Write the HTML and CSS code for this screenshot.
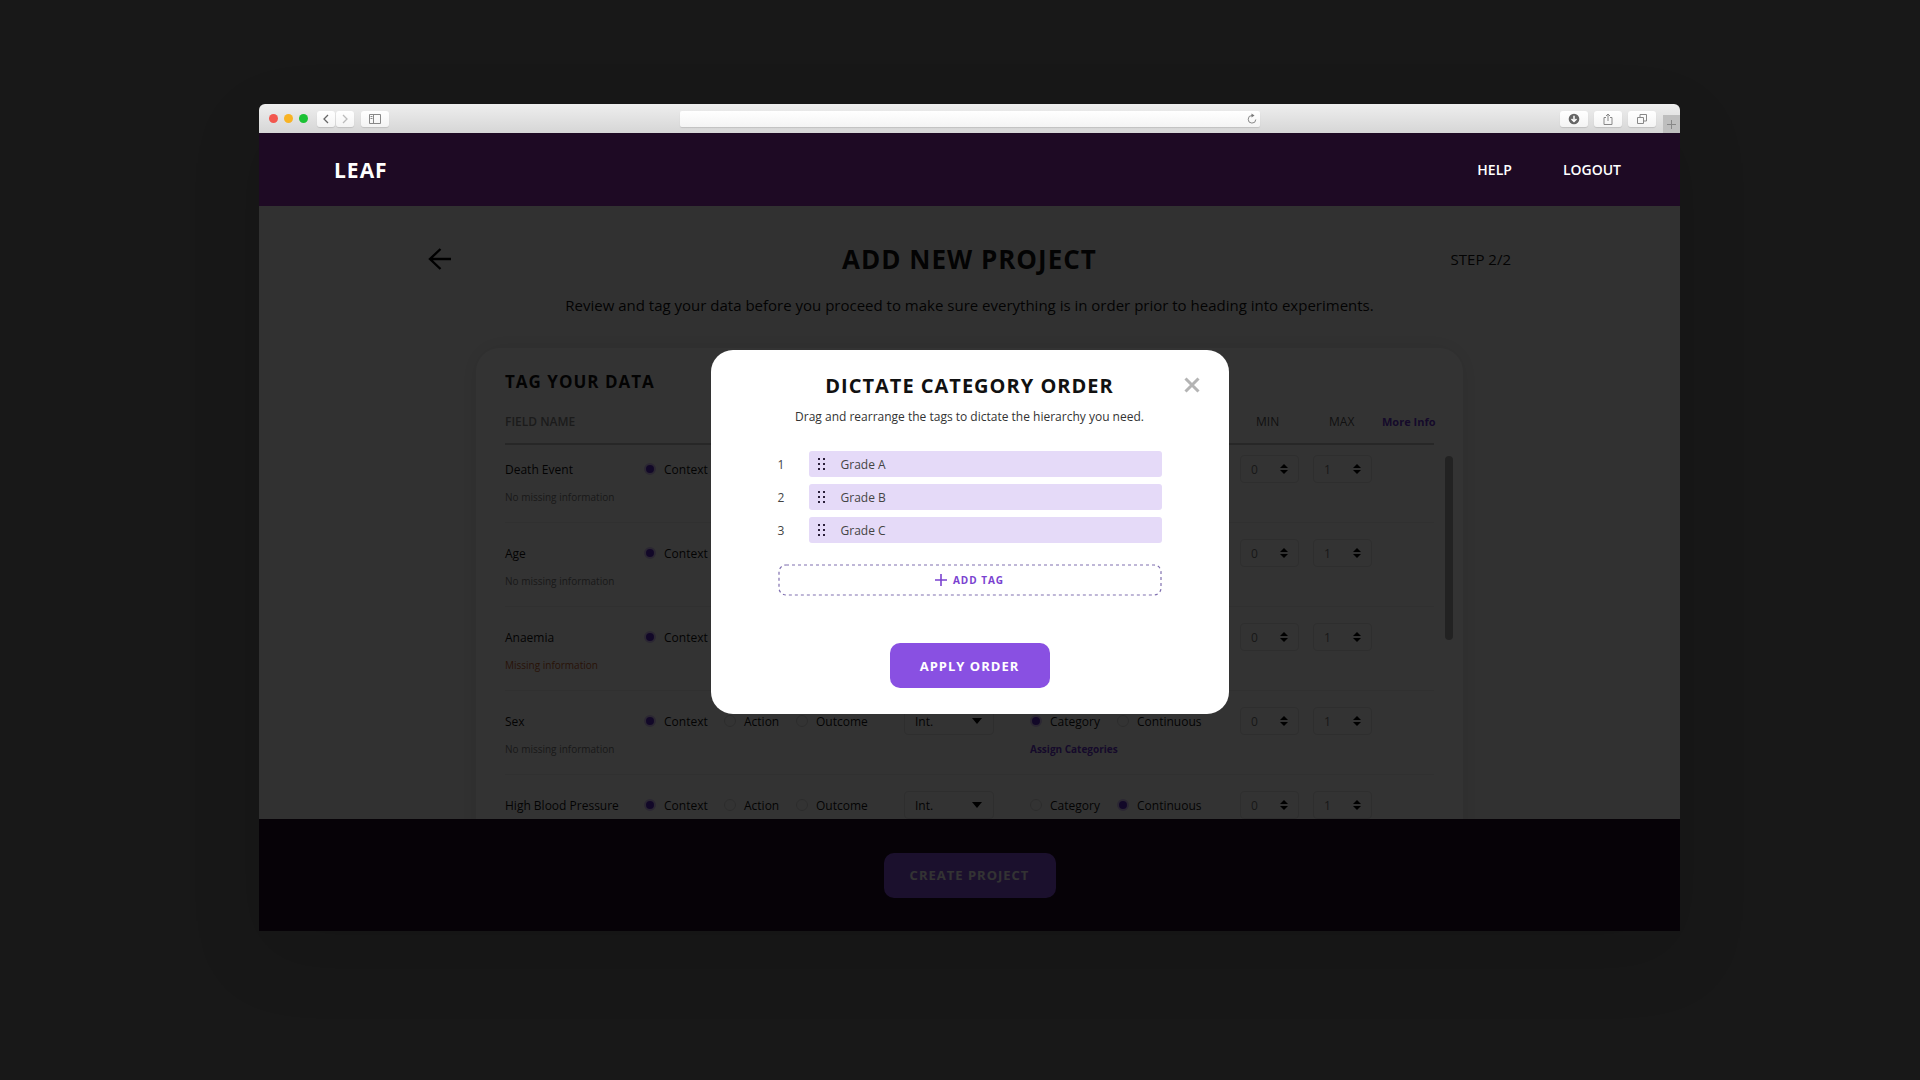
FILE: index.html
```html
<!DOCTYPE html>
<html lang="en">
<head>
<meta charset="utf-8">
<title>Leaf</title>
<link rel="stylesheet" href="styles.css">
</head>
<body>
<div class="window">
  <div class="toolbar">
    <div class="lights"><span class="light red"></span><span class="light amber"></span><span class="light green"></span></div>
    <div class="pair">
      <button class="tool" aria-label="Back"><svg width="8" height="10" viewBox="0 0 8 10"><path d="M6 1 2 5l4 4" fill="none" stroke="#666" stroke-width="1.3"/></svg></button>
      <button class="tool" aria-label="Forward"><svg width="8" height="10" viewBox="0 0 8 10"><path d="m2 1 4 4-4 4" fill="none" stroke="#bbb" stroke-width="1.3"/></svg></button>
    </div>
    <button class="tool wide" aria-label="Sidebar"><svg width="12" height="10" viewBox="0 0 12 10"><path d="M.5.5h11v9H.5zM4.500.5v9M1.500 2.500h2M1.500 4.500h2" fill="none" stroke="#888"/></svg></button>
    <div class="address">
      <input class="url" type="text" aria-label="Address">
      <button class="reload" aria-label="Reload"><svg width="10" height="12" viewBox="0 0 10 12"><path d="M5 2.500a3.800 3.800 0 1 0 3.800 4" fill="none" stroke="#888"/><path d="M4.500.5 7.500 2.500 4.500 4.500z" fill="#777"/></svg></button>
    </div>
    <div class="tools">
      <button class="tool wide" aria-label="Downloads"><svg width="12" height="12" viewBox="0 0 12 12"><circle cx="6" cy="6" r="5.300" fill="#666"/><path d="M6 2.800v5M3.500 6 6 8.500 8.500 6" fill="none" stroke="#fff" stroke-width="1.500"/></svg></button>
      <button class="tool wide" aria-label="Share"><svg width="10" height="12" viewBox="0 0 10 12"><path d="M3 4.500H1v7h8v-7H7M5 8V1M3 3l2-2 2 2" fill="none" stroke="#888"/></svg></button>
      <button class="tool wide" aria-label="Tabs"><svg width="10" height="10" viewBox="0 0 10 10"><path d="M.5 3.500h6v6h-6zM3 3.500v-3h6.500V7h-3" fill="none" stroke="#888"/></svg></button>
    </div>
    <button class="newtab" aria-label="New tab"><svg width="9" height="9" viewBox="0 0 9 9"><path d="M4.500 0v9M0 4.500h9" stroke="#888"/></svg></button>
  </div>

  <header class="nav">
    <a class="brand" href="#">LEAF</a>
    <nav class="links"><a href="#">HELP</a><a href="#">LOGOUT</a></nav>
  </header>

  <div class="stage">
    <main class="content">
      <div class="heading">
        <button class="back" aria-label="Go back"><svg width="24" height="24" viewBox="0 0 24 24"><path d="M12.500 2 2 12l10.500 10M2 12h21" fill="none" stroke="#000" stroke-width="2.400"/></svg></button>
        <h1>ADD NEW PROJECT</h1>
        <span class="step">STEP 2/2</span>
      </div>
      <p class="intro">Review and tag your data before you proceed to make sure everything is in order prior to heading into experiments.</p>

      <section class="card">
        <div class="data">
          <h2>TAG YOUR DATA</h2>
          <table>
            <colgroup><col class="c-field"><col class="c-role"><col class="c-type"><col class="c-kind"><col class="c-min"><col class="c-max"><col class="c-more"></colgroup>
            <thead><tr><th>FIELD NAME</th><th></th><th></th><th></th><th class="num">MIN</th><th class="num">MAX</th><th class="more"><a href="#">More Info</a></th></tr></thead>
            <tbody id="rows"></tbody>
          </table>
        </div>
        <div class="scrollbar"></div>
      </section>
    </main>

    <footer class="footer"><button class="primary create">CREATE PROJECT</button></footer>

    <div class="scrim">
      <section class="dialog" role="dialog" aria-labelledby="dialog-title">
        <div class="dialog-head">
          <h2 id="dialog-title">DICTATE CATEGORY ORDER</h2>
          <button class="close" aria-label="Close"><svg width="16" height="16" viewBox="0 0 16 16"><path d="m1.500 1.500 13 13m0-13-13 13" stroke="#b4b4b4" stroke-width="3"/></svg></button>
        </div>
        <p>Drag and rearrange the tags to dictate the hierarchy you need.</p>
        <ol class="tags">
          <li><span class="rank">1</span><span class="tag"><svg class="grip" width="8" height="12" viewBox="0 0 8 12"><path d="M0 0h2v2H0zM5 0h2v2H5zM0 5h2v2H0zM5 5h2v2H5zM0 10h2v2H0zM5 10h2v2H5z" fill="#2b1f3a"/></svg>Grade A</span></li>
          <li><span class="rank">2</span><span class="tag"><svg class="grip" width="8" height="12" viewBox="0 0 8 12"><path d="M0 0h2v2H0zM5 0h2v2H5zM0 5h2v2H0zM5 5h2v2H5zM0 10h2v2H0zM5 10h2v2H5z" fill="#2b1f3a"/></svg>Grade B</span></li>
          <li><span class="rank">3</span><span class="tag"><svg class="grip" width="8" height="12" viewBox="0 0 8 12"><path d="M0 0h2v2H0zM5 0h2v2H5zM0 5h2v2H0zM5 5h2v2H5zM0 10h2v2H0zM5 10h2v2H5z" fill="#2b1f3a"/></svg>Grade C</span></li>
        </ol>
        <button class="add"><svg class="dashes" aria-hidden="true"><rect x="1" y="1" rx="7"/></svg><svg width="12" height="12" viewBox="0 0 12 12"><path d="M6 0v12M0 6h12" stroke="#7a42d0" stroke-width="1.600"/></svg>ADD TAG</button>
        <button class="primary apply">APPLY ORDER</button>
      </section>
    </div>
  </div>
</div>
<script src="script.js"></script>
</body>
</html>
```
FILE: styles.css
```css
* { box-sizing: border-box; }

body {
  margin: 0;
  padding: 104px 240px 0 259px;
  min-height: 100vh;
  background: #181818;
  color: #111;
  font-family: "Open Sans", "Noto Sans", sans-serif;
  font-size: 12px;
  overflow-x: hidden;
}

h1, h2, p, ol { margin: 0; padding: 0; }
button, input, select { font: inherit; color: inherit; }
button { border: 0; padding: 0; background: none; display: inline-flex; align-items: center; justify-content: center; }
a { color: inherit; text-decoration: none; }
svg { display: block; flex: none; }

.window {
  display: flex;
  flex-direction: column;
  aspect-ratio: 1421 / 827;
  border-radius: 6px 6px 0 0;
  box-shadow: 0 24px 72px rgba(0, 0, 0, .12);
}

/* Browser toolbar */
.toolbar {
  position: relative;
  display: flex;
  align-items: center;
  height: 29px;
  padding-left: 10px;
  border-radius: 6px 6px 0 0;
  background: linear-gradient(#eee, #d6d6d6);
}
.lights { display: flex; gap: 6px; margin-right: 9px; }
.light { width: 9px; height: 9px; border-radius: 50%; }
.red { background: #f2574e; }
.amber { background: #f8b324; }
.green { background: #1cc235; }
.pair { display: flex; gap: 1px; margin-right: 7px; }
.tool { width: 18px; height: 16px; border-radius: 3px; background: linear-gradient(#fff, #f4f4f4); box-shadow: 0 1px 1px rgba(0, 0, 0, .12); }
.tool.wide { width: 28px; }
.address {
  display: flex;
  align-items: center;
  position: absolute;
  left: 421px;
  right: 420px;
  height: 16px;
  padding-right: 3px;
  border-radius: 2px;
  background: linear-gradient(#fff, #f4f4f4);
  box-shadow: 0 1px 1px rgba(0, 0, 0, .12);
}
.url { flex: 1; min-width: 0; height: 14px; padding: 0; border: 0; background: none; }
.tools { display: flex; gap: 6px; margin-left: auto; margin-right: 7px; }
.newtab { align-self: flex-end; width: 17px; height: 18px; background: #bebebe; }

/* App header */
.nav {
  display: flex;
  align-items: center;
  justify-content: space-between;
  height: 73px;
  padding: 0 59px 0 75px;
  background: #1e0a24;
  color: #fff;
}
.brand { font-size: 21px; font-weight: 700; letter-spacing: 1px; }
.links { display: flex; gap: 51px; font-size: 14px; font-weight: 600; }

.stage { position: relative; flex: 1; min-height: 0; display: flex; flex-direction: column; }
.content { flex: 1; min-height: 0; overflow: hidden; background: #f5f5f5; }
.heading {
  display: grid;
  grid-template-columns: 1fr auto 1fr;
  align-items: center;
  height: 38px;
  margin: 34px 169px 0;
}
.back { justify-self: start; }
h1 { font-size: 26px; line-height: 38px; font-weight: 700; letter-spacing: 1px; }
.step { justify-self: end; font-size: 15px; }
.intro { margin-top: 15px; font-size: 15px; line-height: 24px; text-align: center; }

.card {
  display: flex;
  gap: 11px;
  width: 69%;
  min-width: 987px;
  margin: 31px auto 0;
  padding: 20px 10px 60px 29px;
  border-radius: 24px;
  background: #fff;
  box-shadow: 0 0 24px rgba(0, 0, 0, .1);
}
.data { flex: 1; }
.card h2 { font-size: 17px; line-height: 28px; font-weight: 700; letter-spacing: 1px; }
.scrollbar { width: 8px; height: 184px; margin-top: 88px; border-radius: 4px; background: #a8a8a8; }

table { width: 100%; border-collapse: separate; border-spacing: 0; table-layout: fixed; }
.c-field { width: 139px; }
.c-role { width: 260px; }
.c-type { width: 126px; }
.c-min { width: 73px; }
.c-max { width: 69px; }
.c-more { width: 52px; }
th { height: 49px; padding: 3px 0 0; border-bottom: 2px solid #c4c4c4; font-size: 12px; font-weight: 600; color: #888; text-align: left; white-space: nowrap; }
.num { padding-left: 16px; font-weight: 400; color: #555; }
.more { font-size: 11px; }
td { padding: 16px 0 15px; height: 84px; vertical-align: top; border-bottom: 1px solid #ededed; white-space: nowrap; }
tbody tr:first-child td { height: 78px; padding-top: 10px; }
.line { display: flex; align-items: center; height: 28px; }
.note { display: block; margin-top: 4px; font-size: 10px; line-height: 20px; color: #7d7d7d; }
.note.warn { color: #c8602a; }
.more a, .note.assign { color: #6a35d2; font-weight: 700; }
.option { display: flex; align-items: center; gap: 8px; }
.role .option:nth-child(1) { width: 80px; }
.role .option:nth-child(2) { width: 72px; }
.kind .option:nth-child(1) { width: 87px; }
input[type="radio"] { appearance: none; width: 12px; height: 12px; margin: 0; border: 1px solid #dadada; border-radius: 50%; background: #fff; }
input[type="radio"]:checked { border: 2px solid #d5c0f7; background: #5b28c8; }

.select, .number { position: relative; display: block; height: 28px; }
.select { width: 90px; }
.number { width: 59px; }
.select select, .number input { appearance: none; width: 100%; height: 28px; padding: 0 10px; border: 1px solid #e4e4e4; border-radius: 4px; background: #fff; }
.number input { appearance: textfield; color: #777; }
.number input::-webkit-inner-spin-button { appearance: none; }
.select svg { position: absolute; right: 12px; top: 11px; }
.number svg { position: absolute; right: 11px; top: 9px; }

.footer { display: flex; align-items: center; justify-content: center; height: 112px; background: #1e0a24; }
.primary { height: 45px; border-radius: 10px; background: #8950e2; color: #fff; font-size: 13px; font-weight: 700; letter-spacing: 1px; }
.create { width: 172px; }
.apply { width: 160px; }

/* Dialog */
.scrim { position: absolute; inset: 0; display: flex; align-items: flex-start; justify-content: center; padding-top: 144px; background: rgba(0, 0, 0, .8); }
.dialog { display: flex; flex-direction: column; align-items: center; width: 518px; padding: 22px 67px 26px; border-radius: 22px; background: #fff; }
.dialog-head { position: relative; align-self: stretch; text-align: center; }
.dialog h2 { font-size: 20px; line-height: 28px; font-weight: 700; letter-spacing: 1px; white-space: nowrap; }
.close { position: absolute; right: -38px; top: 5px; }
.dialog p { margin-top: 7px; font-size: 12px; line-height: 20px; color: #333; white-space: nowrap; }
.tags { align-self: stretch; display: grid; gap: 7px; margin-top: 24px; list-style: none; color: #444; }
.tags li { display: flex; align-items: center; }
.rank { width: 31px; }
.tag { flex: 1; display: flex; align-items: center; gap: 15px; height: 26px; padding-left: 9px; border-radius: 3px; background: #e5daf8; }
.add { position: relative; align-self: stretch; gap: 6px; height: 32px; margin-top: 21px; color: #7a42d0; font-size: 10px; font-weight: 700; letter-spacing: 1px; }
.dashes { position: absolute; inset: 0; width: 100%; height: 100%; }
.dashes rect { width: calc(100% - 2px); height: calc(100% - 2px); fill: none; stroke: #8070b0; stroke-width: 1.2; stroke-dasharray: 3 3; }
.apply { margin-top: 47px; }
```
FILE: script.js
```js
const rows = [
  { name: "Death Event", kind: 0 },
  { name: "Age", kind: 1 },
  { name: "Anaemia", kind: 1, missing: true },
  { name: "Sex", kind: 0 },
  { name: "High Blood Pressure", kind: 1 }
];

const radios = (group, labels, checked) => labels.map((label, i) =>
  `<label class="option"><input type="radio" name="${group}"${i === checked ? " checked" : ""}>${label}</label>`).join("");

const number = (label, value) =>
  `<label class="number"><input type="number" aria-label="${label}" value="${value}">
  <svg width="8" height="10" viewBox="0 0 8 10"><path d="M4 0 8 4H0zM4 10 0 6h8z"/></svg></label>`;

document.getElementById("rows").innerHTML = rows.map((row, i) => `<tr>
  <td><div class="line">${row.name}</div><span class="note${row.missing ? " warn" : ""}">${row.missing ? "Missing information" : "No missing information"}</span></td>
  <td><div class="line role">${radios("role" + i, ["Context", "Action", "Outcome"], 0)}</div></td>
  <td><label class="select"><select aria-label="Data type"><option>Int.</option></select>
    <svg width="10" height="6" viewBox="0 0 10 6"><path d="M0 0h10L5 6z"/></svg></label></td>
  <td><div class="line kind">${radios("kind" + i, ["Category", "Continuous"], row.kind)}</div>${row.kind === 0 ? '<a class="note assign" href="#">Assign Categories</a>' : ""}</td>
  <td>${number("Minimum", 0)}</td>
  <td>${number("Maximum", 1)}</td>
  <td></td>
</tr>`).join("");
```
